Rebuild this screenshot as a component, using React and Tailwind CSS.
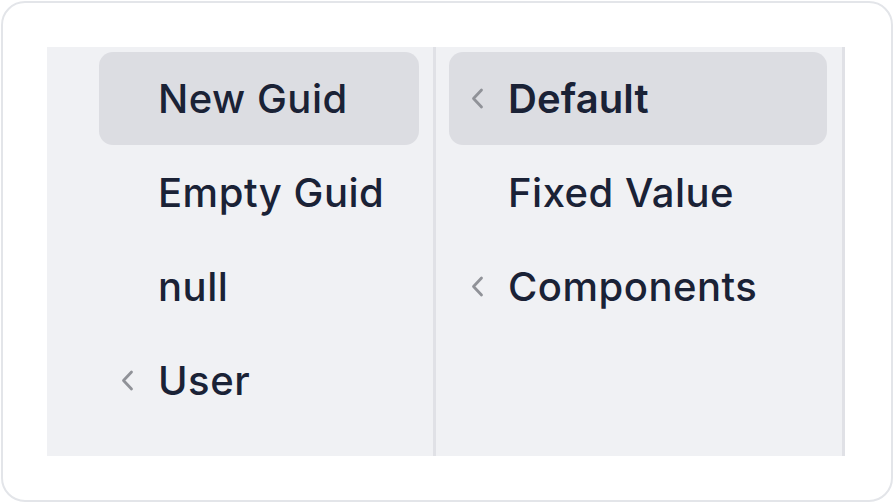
const Chevron = () => (
  <svg width="14" height="25" viewBox="0 0 14 25" fill="none" className="shrink-0">
    <path d="M11.5 4 L3.5 12.5 L11.5 21" stroke="#909298" strokeWidth="2.8" strokeLinecap="round" strokeLinejoin="round" />
  </svg>
);

function Item({ label, chevron, active, bold }) {
  return (
    <div
      className={
        "flex h-[93px] items-center rounded-[14px] pl-[21px] " +
        (active ? "bg-[#dcdde2]" : "")
      }
    >
      {chevron ? <Chevron /> : <span className="w-[14px] shrink-0" />}
      <span
        className={
          "ml-[24px] text-[40px] leading-none text-[#1a2236] " +
          (bold ? "font-semibold tracking-[0.1px]" : "font-medium tracking-[0.5px]")
        }
      >
        {label}
      </span>
    </div>
  );
}

export default function App() {
  return (
    <div className="h-[503px] w-[894px] bg-white p-px" style={{ fontFamily: "Inter, 'Noto Sans', sans-serif" }}>
      <div className="h-full rounded-[24px] border-2 border-[#e3e5e9] pl-[44px] pt-[44px]">
        <div className="flex h-[409px] w-[798px] bg-[#f0f1f4]">
          <div className="flex w-[389px] flex-col gap-px border-r-[3px] border-[#e0e1e6] pl-[52px] pr-[14px] pt-[5px]">
            <Item label="New Guid" active />
            <Item label="Empty Guid" />
            <Item label="null" />
            <Item label="User" chevron />
          </div>
          <div className="flex w-[409px] flex-col gap-px border-r-[3px] border-[#e0e1e6] pl-[13px] pr-[15px] pt-[5px]">
            <Item label="Default" chevron active bold />
            <Item label="Fixed Value" />
            <Item label="Components" chevron />
          </div>
        </div>
      </div>
    </div>
  );
}
